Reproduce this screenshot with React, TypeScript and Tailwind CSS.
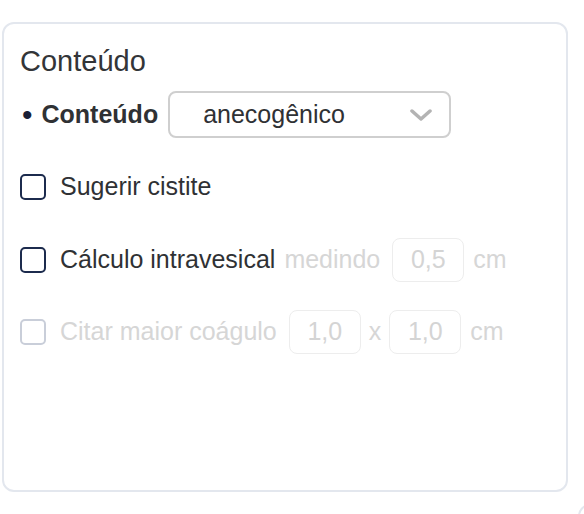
const Checkbox = ({ disabled }: { disabled?: boolean }) => (
  <span
    className={
      "inline-block h-[26px] w-[26px] shrink-0 rounded-[5px] border-2 " +
      (disabled ? "border-[#c9ced9]" : "border-[#1c2b4d]")
    }
  />
);

const NumBox = ({ value }: { value: string }) => (
  <span className="flex h-[44px] w-[72px] items-center justify-center rounded-[8px] border border-[#ededed] text-[#d4d4d4]">
    {value}
  </span>
);

const App = () => {
  return (
    <div
      className="h-[514px] w-[584px] overflow-hidden bg-white pl-[2px] pt-[22px] text-[25px] text-[#2f3134]"
      style={{ fontFamily: '"Liberation Sans", Arial, sans-serif' }}
    >
      <div className="h-[470px] w-[566px] rounded-[12px] border-2 border-[#e3e7ee] px-[16px] pt-[20px]">
        <h2 className="text-[29px] leading-[34px] text-[#333538]">Conteúdo</h2>

        <div className="mt-[13px] flex h-[47px] items-center">
          <span className="ml-[2px] text-[30px] leading-none text-[#1a1f36]">•</span>
          <span className="ml-[9px] font-bold">Conteúdo</span>
          <div className="ml-[10px] flex h-[47px] w-[283px] items-center justify-between rounded-[8px] border-2 border-[#cfcfcf] pl-[33px] pr-[17px]">
            <span>anecogênico</span>
            <svg width="22" height="14" viewBox="0 0 22 14" fill="none">
              <path d="M2 3 L11 11 L20 3" stroke="#b3b3b3" strokeWidth="3.5" strokeLinecap="round" strokeLinejoin="round" />
            </svg>
          </div>
        </div>

        <div className="mt-[27px] flex h-[44px] items-center gap-[14px]">
          <Checkbox />
          <span>Sugerir cistite</span>
        </div>

        <div className="mt-[29px] flex h-[44px] items-center">
          <Checkbox />
          <span className="ml-[14px]">Cálculo intravesical</span>
          <span className="ml-[9px] text-[#d6d6d6]">medindo</span>
          <span className="ml-[12px]">
            <NumBox value="0,5" />
          </span>
          <span className="ml-[9px] text-[#d6d6d6]">cm</span>
        </div>

        <div className="mt-[28px] flex h-[44px] items-center text-[#d6d6d6]">
          <Checkbox disabled />
          <span className="ml-[14px]">Citar maior coágulo</span>
          <span className="ml-[12px]">
            <NumBox value="1,0" />
          </span>
          <span className="ml-[8px]">x</span>
          <span className="ml-[8px]">
            <NumBox value="1,0" />
          </span>
          <span className="ml-[9px]">cm</span>
        </div>
      </div>

      <div className="ml-[576px] mt-[12px] h-[40px] w-[200px] rounded-[12px] border-2 border-[#e3e7ee]" />
    </div>
  );
};

export default App;
